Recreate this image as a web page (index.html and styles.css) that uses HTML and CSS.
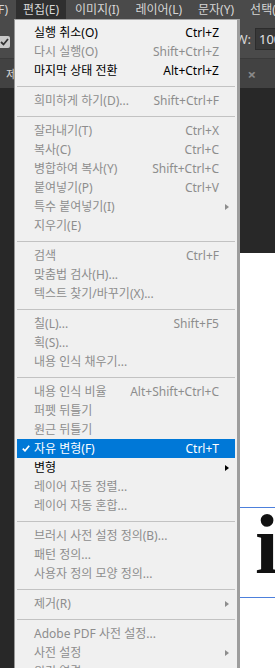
FILE: index.html
```html
<!DOCTYPE html>
<html>
<head>
<meta charset="utf-8">
<link rel="stylesheet" href="styles.css">
</head>
<body>
<div class="app">

  <div class="menubar">
    <span class="mb-item first">F)</span>
    <span class="mb-item active">편집(E)</span>
    <span class="mb-item">이미지(I)</span>
    <span class="mb-item">레이어(L)</span>
    <span class="mb-item">문자(Y)</span>
    <span class="mb-item">선택(S)</span>
  </div>

  <div class="options">
    <span class="opt-check">
      <svg width="11" height="12" viewBox="0 0 11 12"><rect x="-3" y="0" width="13" height="12" rx="2" fill="#c9c9c9"/><polyline points="1,6 3.5,8.5 8,3" fill="none" stroke="#333" stroke-width="1.8"/></svg>
    </span>
    <span class="spacer"></span>
    <span class="opt-label">W:</span>
    <span class="opt-input">100%</span>
  </div>

  <div class="tabbar">
    <span class="tab-title">제목 없음-1 @ 66.7%(RGB/8)</span>
    <span class="tab-mod">*</span>
    <span class="tab-close">×</span>
  </div>

  <div class="workspace">
    <div class="canvas">
      <div class="guide guide-a"></div>
      <div class="guide guide-b"></div>
      <span class="canvas-text">i</span>
    </div>
  </div>

  <!-- edit dropdown -->
  <div class="menu">
    <div class="item on"><span class="chk"></span><span class="label">실행 취소(O)</span><span class="key">Ctrl+Z</span><span class="sub"></span></div>
    <div class="item"><span class="chk"></span><span class="label">다시 실행(O)</span><span class="key">Shift+Ctrl+Z</span><span class="sub"></span></div>
    <div class="item on"><span class="chk"></span><span class="label">마지막 상태 전환</span><span class="key">Alt+Ctrl+Z</span><span class="sub"></span></div>
    <div class="sep"></div>
    <div class="item"><span class="chk"></span><span class="label">희미하게 하기(D)...</span><span class="key">Shift+Ctrl+F</span><span class="sub"></span></div>
    <div class="sep"></div>
    <div class="item"><span class="chk"></span><span class="label">잘라내기(T)</span><span class="key">Ctrl+X</span><span class="sub"></span></div>
    <div class="item"><span class="chk"></span><span class="label">복사(C)</span><span class="key">Ctrl+C</span><span class="sub"></span></div>
    <div class="item"><span class="chk"></span><span class="label">병합하여 복사(Y)</span><span class="key">Shift+Ctrl+C</span><span class="sub"></span></div>
    <div class="item"><span class="chk"></span><span class="label">붙여넣기(P)</span><span class="key">Ctrl+V</span><span class="sub"></span></div>
    <div class="item"><span class="chk"></span><span class="label">특수 붙여넣기(I)</span><span class="key"></span><span class="sub"><i class="arrow"></i></span></div>
    <div class="item"><span class="chk"></span><span class="label">지우기(E)</span><span class="key"></span><span class="sub"></span></div>
    <div class="sep"></div>
    <div class="item"><span class="chk"></span><span class="label">검색</span><span class="key">Ctrl+F</span><span class="sub"></span></div>
    <div class="item"><span class="chk"></span><span class="label">맞춤법 검사(H)...</span><span class="key"></span><span class="sub"></span></div>
    <div class="item"><span class="chk"></span><span class="label">텍스트 찾기/바꾸기(X)...</span><span class="key"></span><span class="sub"></span></div>
    <div class="sep"></div>
    <div class="item"><span class="chk"></span><span class="label">칠(L)...</span><span class="key">Shift+F5</span><span class="sub"></span></div>
    <div class="item"><span class="chk"></span><span class="label">획(S)...</span><span class="key"></span><span class="sub"></span></div>
    <div class="item"><span class="chk"></span><span class="label">내용 인식 채우기...</span><span class="key"></span><span class="sub"></span></div>
    <div class="sep"></div>
    <div class="item"><span class="chk"></span><span class="label">내용 인식 비율</span><span class="key">Alt+Shift+Ctrl+C</span><span class="sub"></span></div>
    <div class="item"><span class="chk"></span><span class="label">퍼펫 뒤틀기</span><span class="key"></span><span class="sub"></span></div>
    <div class="item"><span class="chk"></span><span class="label">원근 뒤틀기</span><span class="key"></span><span class="sub"></span></div>
    <div class="item selected"><span class="chk"><svg width="8" height="7" viewBox="0 0 8 7"><polyline points="0.8,3.6 3,5.8 7.2,0.8" fill="none" stroke="#fff" stroke-width="1.7"/></svg></span><span class="label">자유 변형(F)</span><span class="key">Ctrl+T</span><span class="sub"></span></div>
    <div class="item on"><span class="chk"></span><span class="label">변형</span><span class="key"></span><span class="sub"><i class="arrow"></i></span></div>
    <div class="item"><span class="chk"></span><span class="label">레이어 자동 정렬...</span><span class="key"></span><span class="sub"></span></div>
    <div class="item"><span class="chk"></span><span class="label">레이어 자동 혼합...</span><span class="key"></span><span class="sub"></span></div>
    <div class="sep"></div>
    <div class="item"><span class="chk"></span><span class="label">브러시 사전 설정 정의(B)...</span><span class="key"></span><span class="sub"></span></div>
    <div class="item"><span class="chk"></span><span class="label">패턴 정의...</span><span class="key"></span><span class="sub"></span></div>
    <div class="item"><span class="chk"></span><span class="label">사용자 정의 모양 정의...</span><span class="key"></span><span class="sub"></span></div>
    <div class="sep"></div>
    <div class="item"><span class="chk"></span><span class="label">제거(R)</span><span class="key"></span><span class="sub"><i class="arrow"></i></span></div>
    <div class="sep"></div>
    <div class="item"><span class="chk"></span><span class="label">Adobe PDF 사전 설정...</span><span class="key"></span><span class="sub"></span></div>
    <div class="item"><span class="chk"></span><span class="label">사전 설정</span><span class="key"></span><span class="sub"><i class="arrow"></i></span></div>
    <div class="item"><span class="chk"></span><span class="label">원격 연결...</span><span class="key"></span><span class="sub"></span></div>
  </div>

</div>
</body>
</html>
```

FILE: styles.css
```css
html, body {
  margin: 0;
  padding: 0;
}

body {
  width: 275px;
  height: 668px;
  overflow: hidden;
  background-color: #282828;
  font-family: "Noto Sans", "Noto Sans CJK KR", sans-serif;
  font-size: 12px;
}

.app {
  position: relative;
  width: 275px;
  height: 668px;
  overflow: hidden;
}

/* top menu bar */
.menubar {
  display: flex;
  gap: 2px;
  height: 19px;
  line-height: 19px;
  background-color: #4a4a4a;
  color: #d6d6d6;
  white-space: nowrap;
}

.mb-item {
  padding: 0 7px;
}

.mb-item.first {
  margin-left: -2px;
  padding: 0 6px 0 0;
}

.mb-item.active {
  background-color: #2f2f2f;
}

/* options bar */
.options {
  display: flex;
  align-items: center;
  height: 40px;
  background-color: #4a4a4a;
  border-bottom: 1px solid #3a3a3a;
  box-sizing: border-box;
  color: #d6d6d6;
}

.opt-check {
  display: flex;
  margin-top: 7px;
}

.spacer {
  flex: 1;
}

.opt-label {
  margin-right: 4px;
  font-size: 13px;
}

.opt-input {
  width: 16px;
  height: 20px;
  line-height: 20px;
  padding-left: 3px;
  background-color: #383838;
  border: 1px solid #2c2c2c;
  border-right: none;
  overflow: hidden;
  white-space: nowrap;
  font-size: 13px;
  color: #e2e2e2;
}

/* document tab */
.tabbar {
  display: flex;
  align-items: center;
  height: 29px;
  padding: 0 19px 0 6px;
  background-color: #424242;
  color: #cfcfcf;
  white-space: nowrap;
}

.tab-title {
  flex: 1;
  overflow: hidden;
}

.tab-mod {
  margin-right: 10px;
}

.tab-close {
  color: #8a8a8a;
  font-size: 15px;
  font-weight: bold;
}

/* workspace and canvas */
.workspace {
  padding-top: 165px;
}

.canvas {
  position: relative;
  height: 500px;
  margin-left: 100px;
  background-color: #ffffff;
}

.guide {
  position: absolute;
  left: 0;
  right: 0;
  height: 1px;
  background-color: #4d80dc;
}

.guide-a {
  top: 254px;
}

.guide-b {
  top: 344px;
}

.canvas-text {
  position: absolute;
  left: 155px;
  top: 241px;
  font-family: "Liberation Serif", serif;
  font-weight: bold;
  font-size: 85px;
  line-height: 100px;
  color: #111;
}

/* edit dropdown */
.menu {
  position: absolute;
  left: 14px;
  top: 19px;
  width: 218px;
  padding: 3px 2px 0 2px;
  background-color: #f0f0f0;
  border-left: 1px solid #979797;
  border-top: 1px solid #a8a8a8;
  border-right: 3px solid #9d9d9d;
  color: #8d8d8d;
}

.item {
  display: grid;
  grid-template-columns: 17px 1fr auto 16px;
  align-items: center;
  height: 19px;
  line-height: 19px;
  white-space: nowrap;
}

.item.on {
  color: #000;
}

.item.selected {
  background-color: #0078d7;
  color: #fff;
}

.chk {
  display: flex;
  justify-content: center;
  padding-left: 1px;
}

.sub {
  display: flex;
  justify-content: center;
}

.arrow {
  width: 0;
  height: 0;
  border-left: 4px solid #8d8d8d;
  border-top: 3.5px solid transparent;
  border-bottom: 3.5px solid transparent;
}

.item.on .arrow {
  border-left-color: #000;
}

.sep {
  height: 1px;
  margin: 6px 0 4px 0;
  background-color: #c2c2c2;
}
```
